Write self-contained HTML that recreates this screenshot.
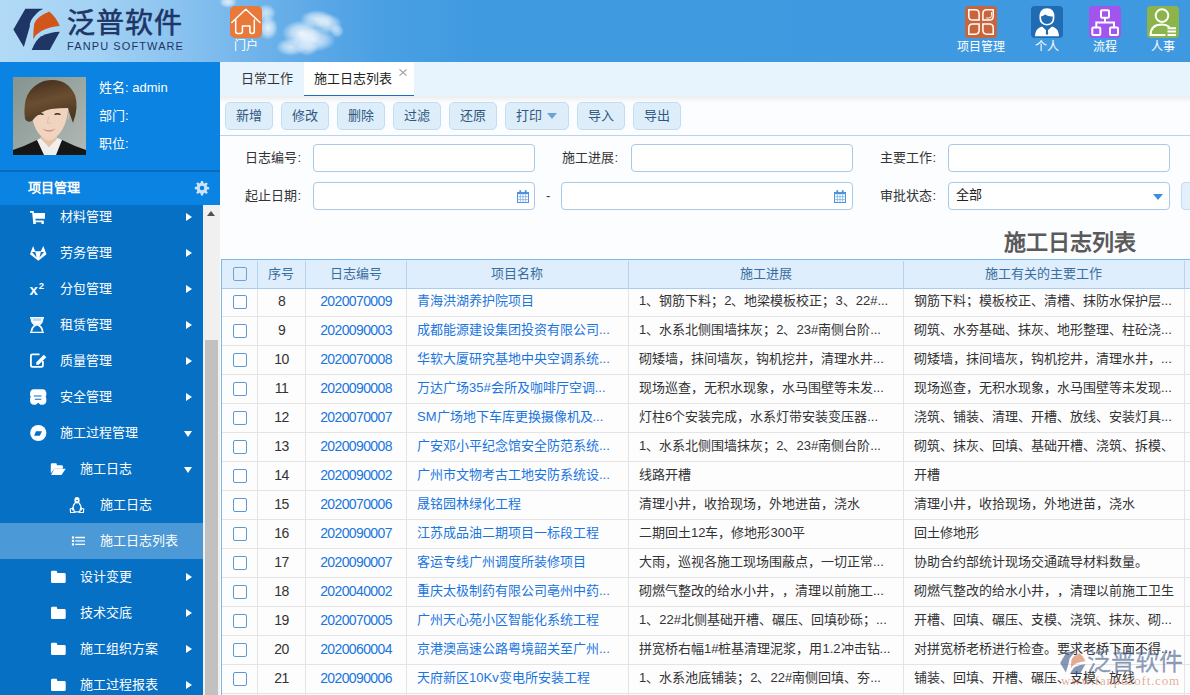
<!DOCTYPE html><html lang="zh-CN"><head><meta charset="utf-8"><style>
*{margin:0;padding:0;box-sizing:border-box}
html,body{width:1190px;height:695px;overflow:hidden;background:#fff;font-family:"Liberation Sans",sans-serif;font-size:13px;color:#333;text-spacing-trim:space-all}
div,span{position:absolute}
svg{position:absolute;overflow:visible}
.t{white-space:nowrap;line-height:1}
#hdr{left:0;top:0;width:1190px;height:62px;background:linear-gradient(90deg,#b2daf6 0%,#a3d2f4 8%,#86c0ef 16%,#6db2ea 22%,#58a6e6 27.7%,#4aa0e3 32%,#409ae0 40%,#3f99e0 100%);overflow:hidden}
.cloud{border-radius:50%;background:radial-gradient(closest-side,rgba(255,255,255,.95),rgba(255,255,255,.6) 55%,rgba(255,255,255,0))}
.hi{width:32px;height:32px;border-radius:5px}
.hl{color:#fff;font-size:12px;text-align:center;width:80px}
.mi{color:#fff;font-size:13px}
.arr{width:0;height:0;border-top:4.25px solid transparent;border-bottom:4.25px solid transparent;border-left:6px solid #fff}
.arrd{width:0;height:0;border-left:4.6px solid transparent;border-right:4.6px solid transparent;border-top:6px solid #fff}
.btn{top:102px;height:28px;background:#deedfa;border:1px solid #c4dcf1;border-radius:5px;color:#2d5780;font-size:13px;text-align:center;line-height:25px}
.lbl{font-size:13px;color:#333;text-align:right;width:80px}
.inp{height:28px;border:1px solid #a9c9e6;border-radius:4px;background:#fff}
.c{color:#333}
.lk{color:#1a75dd}
.cb{width:14px;height:14px;border:1px solid #5a9ad6;border-radius:2px;background:#fff}
</style></head><body>
<div id="hdr">
<div class="cloud" style="left:219px;top:-4px;width:18px;height:12px;opacity:0.8"></div>
<div class="cloud" style="left:256px;top:4px;width:20px;height:18px;opacity:0.7"></div>
<div class="cloud" style="left:258px;top:16px;width:20px;height:24px;opacity:0.85"></div>
<div class="cloud" style="left:300px;top:10px;width:34px;height:18px;opacity:0.8"></div>
<div class="cloud" style="left:314px;top:14px;width:28px;height:20px;opacity:0.75"></div>
<div class="cloud" style="left:282px;top:20px;width:40px;height:26px;opacity:0.9"></div>
<div class="cloud" style="left:292px;top:28px;width:44px;height:24px;opacity:0.8"></div>
<div class="cloud" style="left:276px;top:38px;width:30px;height:18px;opacity:0.75"></div>
<div class="cloud" style="left:296px;top:40px;width:22px;height:16px;opacity:0.6"></div>
<div class="cloud" style="left:330px;top:24px;width:14px;height:14px;opacity:0.6"></div>
<svg style="left:13px;top:8px" width="48" height="43" viewBox="0 0 48 43">
<path d="M12.35 0.64 H30.3 Q23 4 18 12.5 Q16.5 16 16.8 18.5 L10.85 39 L0.37 21.45 Z" fill="#1e3566"/>
<path d="M20.2 31.2 Q20.5 20 21.3 15.5 Q23 9 36.3 3.5 Q43 9 46.8 18.1 Q37 18.5 28.4 23 Q23 26 20.2 31.2 Z" fill="#d2551c"/>
<path d="M18.7 42 H36.7 L46.8 23.7 Q37.4 23.9 28.4 28.2 Q23 31 18.7 42 Z" fill="#1e3566"/>
</svg>
<div class="t" style="left:67px;top:10px;font-size:28px;color:#1e3566;letter-spacing:1px;font-weight:500;-webkit-text-stroke:0.6px #1e3566">泛普软件</div>
<div class="t" style="left:67px;top:41px;font-size:11px;color:#1e3566;letter-spacing:1.1px">FANPU SOFTWARE</div>
<svg style="left:230px;top:6px" width="32" height="32" viewBox="0 0 32 32">
<rect width="32" height="32" rx="5" fill="#e8793a"/>
<path d="M1.8 16.5 L15.8 3.2 L30 16.5 M5.7 14 V25.5 Q5.7 27.4 7.6 27.4 H10.5 Q12.4 27.4 12.4 25.5 V20 H19.9 V25.5 Q19.9 27.4 21.8 27.4 H22.4 Q24.3 27.4 24.3 25.5 V14" fill="none" stroke="#fff" stroke-width="1.5" stroke-linejoin="round" stroke-linecap="round"/>
</svg>
<div class="t hl" style="left:206px;top:40px;font-size:12px">门户</div>
<svg style="left:965px;top:6px" width="32" height="32" viewBox="0 0 32 32">
<rect width="32" height="32" rx="4" fill="#c9653a"/>
<g fill="none" stroke="#fff" stroke-width="1.5">
<path d="M3.8 3.8 H10.2 Q14.1 3.8 14.1 7.7 V14.1 H7.7 Q3.8 14.1 3.8 10.2 Z"/>
<path d="M28.2 3.8 H21.8 Q17.9 3.8 17.9 7.7 V14.1 H24.3 Q28.2 14.1 28.2 10.2 Z"/>
<path d="M3.8 28.2 H10.2 Q14.1 28.2 14.1 24.3 V17.9 H7.7 Q3.8 17.9 3.8 21.8 Z"/>
<path d="M28.2 28.2 H21.8 Q17.9 28.2 17.9 24.3 V17.9 H24.3 Q28.2 17.9 28.2 21.8 Z"/>
<path d="M26.5 6 V9.5 Q26.5 12 24 12 H21" stroke-width=".9"/>
</g>
</svg>
<div class="t hl" style="left:941px;top:41px">项目管理</div>
<svg style="left:1031px;top:6px" width="32" height="32" viewBox="0 0 32 32">
<rect width="32" height="32" rx="4" fill="#1f6cb2"/>
<path d="M8.4 12 Q8 2.2 16 2.2 Q24 2.2 23.4 12 Q23.4 19 16 19.5 Q8.4 19 8.4 12 Z" fill="#fff"/>
<path d="M10 10.5 Q12.5 10 14 8.5 Q18 11 21.8 10.5 Q22 17.8 16 18 Q10 17.8 10 10.5 Z" fill="#1f6cb2"/>
<path d="M4 30.2 Q4.5 22 11 20.5 L16 25 L21 20.5 Q27.5 22 28 30.2 Z" fill="#fff"/>
<path d="M15.2 22.5 H16.8 L17.2 28 L16 29 L14.8 28 Z" fill="#1f6cb2"/>
</svg>
<div class="t hl" style="left:1007px;top:41px">个人</div>
<svg style="left:1089px;top:6px" width="32" height="32" viewBox="0 0 32 32">
<rect width="32" height="32" rx="4" fill="#a154ee"/>
<g fill="none" stroke="#fff" stroke-width="2">
<rect x="12" y="4.3" width="8" height="7.4" rx="1"/>
<rect x="3.3" y="21.5" width="8" height="7.4" rx="1"/>
<rect x="21" y="21.5" width="8" height="7.4" rx="1"/>
<path d="M16 11.7 V16.5 M7.3 21.5 V16.5 H25 V21.5"/>
</g>
</svg>
<div class="t hl" style="left:1065px;top:41px">流程</div>
<svg style="left:1147px;top:6px" width="32" height="32" viewBox="0 0 32 32">
<rect width="32" height="32" rx="4" fill="#8bb44a"/>
<circle cx="15" cy="9.6" r="6.3" fill="none" stroke="#fff" stroke-width="2"/>
<path d="M3.6 29 Q3.6 18.5 15 18.5 Q19.5 18.5 22.5 21" fill="none" stroke="#fff" stroke-width="2"/>
<path d="M2.6 29 H18.5" stroke="#fff" stroke-width="2"/>
<path d="M20.5 22.2 H29 M20.5 25.6 H29 M20.5 29 H29" stroke="#fff" stroke-width="2"/>
</svg>
<div class="t hl" style="left:1123px;top:41px">人事</div>
</div>
<div style="left:0;top:62px;width:220px;height:633px;background:#0670c5"></div>
<div style="left:0;top:62px;width:220px;height:109px;background:#0b83e2"></div>
<div style="left:0;top:170px;width:220px;height:2px;background:#0a6bbd"></div>
<div style="left:0;top:172px;width:220px;height:33px;background:#0b83e2"></div>
<svg style="left:13px;top:77px" width="73" height="78" viewBox="0 0 73 78">
<defs><linearGradient id="pbg" x1="0" y1="0" x2="1" y2="1"><stop offset="0" stop-color="#84948e"/><stop offset="1" stop-color="#b2b9b6"/></linearGradient>
<linearGradient id="hair" x1="0" y1="0" x2=".3" y2="1"><stop offset="0" stop-color="#3d2b1a"/><stop offset=".55" stop-color="#6b4e31"/><stop offset="1" stop-color="#4d3822"/></linearGradient></defs>
<rect width="73" height="78" fill="url(#pbg)"/>
<path d="M0 78 V73 Q12 69 24 63 L36 74 L49 63 Q61 69 73 73 V78 Z" fill="#161616"/>
<path d="M24 63 L31 78 H43 L49 63 L42 60 L36 70 L30 60 Z" fill="#f1efed"/>
<path d="M28 52 V62 L36 70 L44 62 V52 Z" fill="#e8c2a6"/>
<path d="M18.5 28 Q18 57 36 64 Q54 57 55.5 28 Z" fill="#f0d4bf"/>
<path d="M17.5 36 Q15.5 38 18.5 44 Z M55.5 36 Q57.5 38 54.5 44 Z" fill="#e6c0a5"/>
<path d="M29 51.5 Q36 55 43 51.5 Q36 58 29 51.5 Z" fill="#d48a8a"/>
<path d="M24.5 37.5 Q27.5 36 30.5 37.5 M41.5 37.5 Q44.5 36 47.5 37.5" fill="none" stroke="#3a2a22" stroke-width="1.3"/>
<path d="M35.5 40 L34.5 46 H37.5" fill="none" stroke="#d9b49a" stroke-width=".8"/>
<path d="M12 42 Q8 12 31 4 Q53 -1 62 18 Q66 30 60 46 Q57 38 55 31 Q47 31 38 32 Q27 34 19 44 Q14 46 12 42 Z" fill="url(#hair)"/>
</svg>
<div class="t" style="left:99px;top:81px;color:#fff;font-size:13px">姓名: admin</div>
<div class="t" style="left:99px;top:109px;color:#fff;font-size:13px">部门:</div>
<div class="t" style="left:99px;top:137px;color:#fff;font-size:13px">职位:</div>
<div class="t" style="left:28px;top:181px;color:#fff;font-size:13px;font-weight:bold">项目管理</div>
<svg style="left:195px;top:181px" width="14" height="14" viewBox="0 0 14 14">
<path fill="#cfe3f7" d="M6 0h2l.4 2 1.3.6 1.7-1.2 1.4 1.4-1.2 1.7.6 1.3 2 .4v2l-2 .4-.6 1.3 1.2 1.7-1.4 1.4-1.7-1.2-1.3.6-.4 2H6l-.4-2-1.3-.6-1.7 1.2-1.4-1.4 1.2-1.7-.6-1.3-2-.4V6l2-.4.6-1.3-1.2-1.7 1.4-1.4 1.7 1.2 1.3-.6z"/>
<circle cx="7" cy="7" r="2.3" fill="#0b83e2"/>
</svg>
<div style="left:0;top:523px;width:203px;height:36px;background:#4b99d6"></div>
<svg style="left:30px;top:210px" width="16" height="16" viewBox="0 0 16 16"><path d="M0 1 H3.6 L4 3 H15 V8.8 H5.4 L5.6 10.5 H13.8 V14 H11.5 V12.2 H5.8 V14 H3.3 L2.2 2.8 H0 Z" fill="#fff"/></svg>
<div class="t mi" style="left:60px;top:210px">材料管理</div>
<div class="arr" style="left:186px;top:212.5px"></div>
<svg style="left:30px;top:246px" width="16" height="16" viewBox="0 0 16 16"><path d="M0 8.3 L3.1 0.1 L5.15 5.15 H10.85 L13.3 0.1 L16.5 8.3 L8.3 14.8 Z" fill="#fff"/><path d="M2.04 6 H5.3 L6.7 11.4 Z M10.85 6 H14 L9.5 11.4 Z" fill="#0670c5"/></svg>
<div class="t mi" style="left:60px;top:246px">劳务管理</div>
<div class="arr" style="left:186px;top:248.5px"></div>
<svg style="left:30px;top:280px" width="16" height="16" viewBox="0 0 16 16"><text x="-0.5" y="14.9" font-family="Liberation Sans" font-weight="bold" font-size="15" fill="#fff">x</text><text x="8.8" y="9.4" font-family="Liberation Sans" font-weight="bold" font-size="9.5" fill="#fff">2</text></svg>
<div class="t mi" style="left:60px;top:282px">分包管理</div>
<div class="arr" style="left:186px;top:284.5px"></div>
<svg style="left:30px;top:316px" width="16" height="16" viewBox="0 0 16 16"><path d="M0 1 H14 V2.8 H0 Z M0 15.8 H14 V17 H0 Z" fill="#fff"/><path d="M1.5 2.8 Q1.5 7 5.5 9.3 Q1.5 11.5 1.5 15.8 M12.5 2.8 Q12.5 7 8.5 9.3 Q12.5 11.5 12.5 15.8" fill="none" stroke="#fff" stroke-width="1.7"/><path d="M1.8 2.8 H12.2 Q12 7 7 9.4 Q2 7 1.8 2.8 Z" fill="#fff"/><rect x="3" y="3.2" width="8" height="1.5" fill="#a9cdee"/></svg>
<div class="t mi" style="left:60px;top:318px">租赁管理</div>
<div class="arr" style="left:186px;top:320.5px"></div>
<svg style="left:30px;top:352px" width="16" height="16" viewBox="0 0 16 16"><path d="M9.5 2.3 H2.5 Q0.9 2.3 0.9 3.9 V13.3 Q0.9 14.9 2.5 14.9 H11.3 Q12.9 14.9 12.9 13.3 V9" fill="none" stroke="#fff" stroke-width="1.8"/><path d="M6.2 12.8 L6.3 10.3 L13.8 2.8 L16.3 5.3 L8.7 12.8 Z" fill="#fff"/></svg>
<div class="t mi" style="left:60px;top:354px">质量管理</div>
<div class="arr" style="left:186px;top:356.5px"></div>
<svg style="left:30px;top:388px" width="16" height="16" viewBox="0 0 16 16"><path d="M4 1.3 H12.4 Q16.4 1.3 16.4 6 Q16.4 8 15.6 8.5 Q16.4 9.5 16.4 12 Q16.4 16.8 12.4 16.8 H10.5 L8.2 14.8 L5.9 16.8 H4 Q0 16.8 0 12 Q0 9.5 0.8 8.5 Q0 8 0 6 Q0 1.3 4 1.3 Z" fill="#fff"/><path d="M3.8 8 H11.5 M4.8 11.3 H11.3" stroke="#0670c5" stroke-width="1.1"/></svg>
<div class="t mi" style="left:60px;top:390px">安全管理</div>
<div class="arr" style="left:186px;top:392.5px"></div>
<svg style="left:30px;top:424px" width="16" height="16" viewBox="0 0 16 16"><circle cx="8.3" cy="9" r="8.1" fill="#fff"/><path d="M6 7.2 H12 L9.8 11.8 H4.1 Z" fill="#0670c5"/></svg>
<div class="t mi" style="left:60px;top:426px">施工过程管理</div>
<div class="arrd" style="left:183.5px;top:431px"></div>
<svg style="left:50px;top:460px" width="16" height="16" viewBox="0 0 16 16"><path d="M0.8 4.5 Q0.8 3.2 2 3.2 H6.4 L7 5.2 H11.8 Q12.9 5.2 12.9 6.3 V8.7 H4.3 L0.8 13.5 Z" fill="#fff"/><path d="M4.3 8.7 H15.7 L11.5 14.9 H1.2 Z" fill="#fff"/></svg>
<div class="t mi" style="left:80px;top:462px">施工日志</div>
<div class="arrd" style="left:183.5px;top:467px"></div>
<svg style="left:70px;top:496px" width="16" height="16" viewBox="0 0 16 16"><ellipse cx="7" cy="4.3" rx="2.6" ry="3.2" fill="#fff"/><path d="M5.2 6.8 Q2 10.5 3 14.5 M8.8 6.8 Q12 10.5 11 14.5" fill="none" stroke="#fff" stroke-width="1.3"/><path d="M0.3 13 L3.3 12 L4.5 16.5 H0.6 Z M13.7 13 L10.7 12 L9.5 16.5 H13.4 Z M4.5 15.8 H9.5" fill="none" stroke="#fff" stroke-width="1.2"/><ellipse cx="7" cy="4.6" rx="1" ry=".7" fill="#0670c5"/></svg>
<div class="t mi" style="left:100px;top:498px">施工日志</div>
<svg style="left:70px;top:532px" width="16" height="16" viewBox="0 0 16 16"><rect x="1.9" y="4.4" width="2.2" height="2.2" fill="#fff"/><rect x="1.9" y="7.8" width="2.2" height="2.2" fill="#fff"/><rect x="1.9" y="11.3" width="2.2" height="2.2" fill="#fff"/><path d="M5.3 5.5 H15 M5.3 12.4 H15" stroke="#fff" stroke-width="1.4"/><path d="M5.3 8.9 H15" stroke="#d4e5f5" stroke-width="1.6"/></svg>
<div class="t mi" style="left:100px;top:534px">施工日志列表</div>
<svg style="left:50px;top:568px" width="16" height="16" viewBox="0 0 16 16"><path d="M1 4 Q1 2.7 2.3 2.7 H6.6 L7.4 4.9 H14.4 Q15.7 4.9 15.7 6.2 V13.7 Q15.7 15 14.4 15 H2.3 Q1 15 1 13.7 Z" fill="#fff"/></svg>
<div class="t mi" style="left:80px;top:570px">设计变更</div>
<div class="arr" style="left:186px;top:572.5px"></div>
<svg style="left:50px;top:604px" width="16" height="16" viewBox="0 0 16 16"><path d="M1 4 Q1 2.7 2.3 2.7 H6.6 L7.4 4.9 H14.4 Q15.7 4.9 15.7 6.2 V13.7 Q15.7 15 14.4 15 H2.3 Q1 15 1 13.7 Z" fill="#fff"/></svg>
<div class="t mi" style="left:80px;top:606px">技术交底</div>
<div class="arr" style="left:186px;top:608.5px"></div>
<svg style="left:50px;top:640px" width="16" height="16" viewBox="0 0 16 16"><path d="M1 4 Q1 2.7 2.3 2.7 H6.6 L7.4 4.9 H14.4 Q15.7 4.9 15.7 6.2 V13.7 Q15.7 15 14.4 15 H2.3 Q1 15 1 13.7 Z" fill="#fff"/></svg>
<div class="t mi" style="left:80px;top:642px">施工组织方案</div>
<div class="arr" style="left:186px;top:644.5px"></div>
<svg style="left:50px;top:676px" width="16" height="16" viewBox="0 0 16 16"><path d="M1 4 Q1 2.7 2.3 2.7 H6.6 L7.4 4.9 H14.4 Q15.7 4.9 15.7 6.2 V13.7 Q15.7 15 14.4 15 H2.3 Q1 15 1 13.7 Z" fill="#fff"/></svg>
<div class="t mi" style="left:80px;top:678px">施工过程报表</div>
<div class="arr" style="left:186px;top:680.5px"></div>
<div style="left:0;top:172px;width:220px;height:33px;background:#0b83e2"></div>
<div class="t" style="left:28px;top:181px;color:#fff;font-size:13px;font-weight:bold">项目管理</div>
<svg style="left:195px;top:181px" width="14" height="14" viewBox="0 0 14 14">
<path fill="#cfe3f7" d="M6 0h2l.4 2 1.3.6 1.7-1.2 1.4 1.4-1.2 1.7.6 1.3 2 .4v2l-2 .4-.6 1.3 1.2 1.7-1.4 1.4-1.7-1.2-1.3.6-.4 2H6l-.4-2-1.3-.6-1.7 1.2-1.4-1.4 1.2-1.7-.6-1.3-2-.4V6l2-.4.6-1.3-1.2-1.7 1.4-1.4 1.7 1.2 1.3-.6z"/>
<circle cx="7" cy="7" r="2.3" fill="#0b83e2"/>
</svg>
<div style="left:203px;top:205px;width:17px;height:490px;background:#f0f0f0"></div>
<div style="left:207px;top:211px;width:0;height:0;border-left:4.5px solid transparent;border-right:4.5px solid transparent;border-bottom:5px solid #505050"></div>
<div style="left:205px;top:340px;width:13px;height:355px;background:#c1c1c1"></div>
<div style="left:220px;top:62px;width:970px;height:633px;background:#fbfdff"></div>
<div style="left:220px;top:62px;width:970px;height:34px;background:#e8f4fd"></div>
<div style="left:220px;top:96px;width:970px;height:7px;background:linear-gradient(#ebedef,#fbfdff)"></div>
<div class="t" style="left:241px;top:72px;font-size:13px;color:#333">日常工作</div>
<div style="left:304px;top:62px;width:110px;height:34px;background:#fff;border-bottom:1.5px solid #1b6fc2"></div>
<div class="t" style="left:314px;top:72px;font-size:13px;color:#222">施工日志列表</div>
<svg style="left:399px;top:69px" width="8" height="7" viewBox="0 0 8 7"><path d="M0.5 0.3 L7.5 6.7 M7.5 0.3 L0.5 6.7" stroke="#9a9a9a" stroke-width="1.1"/></svg>
<div class="btn" style="left:225px;width:48px">新增</div>
<div class="btn" style="left:281px;width:48px">修改</div>
<div class="btn" style="left:337px;width:48px">删除</div>
<div class="btn" style="left:393px;width:48px">过滤</div>
<div class="btn" style="left:449px;width:48px">还原</div>
<div class="btn" style="left:577px;width:48px">导入</div>
<div class="btn" style="left:633px;width:48px">导出</div>
<div class="btn" style="left:505px;width:64px;text-align:left;padding-left:10px">打印</div>
<div style="left:547px;top:113px;width:0;height:0;border-left:5px solid transparent;border-right:5px solid transparent;border-top:6px solid #6ea2d6"></div>
<div style="left:220px;top:135px;width:970px;height:1px;background:#b9d4ee"></div>
<div class="t lbl" style="left:221px;top:151px">日志编号:</div>
<div class="inp" style="left:313px;top:144px;width:222px"></div>
<div class="t lbl" style="left:538px;top:151px">施工进展:</div>
<div class="inp" style="left:631px;top:144px;width:222px"></div>
<div class="t lbl" style="left:856px;top:151px">主要工作:</div>
<div class="inp" style="left:948px;top:144px;width:222px"></div>
<div class="t lbl" style="left:221px;top:189px">起止日期:</div>
<div class="inp" style="left:313px;top:182px;width:222px"></div>
<div class="t" style="left:546px;top:189px;color:#333">-</div>
<div class="inp" style="left:561px;top:182px;width:292px"></div>
<svg style="left:517px;top:190px" width="12" height="13" viewBox="0 0 12 13"><rect x="0.5" y="2.5" width="11" height="10" fill="#fff" stroke="#4d92dc" stroke-width="1"/><rect x="0.5" y="2.5" width="11" height="1.6" fill="#4d92dc"/><rect x="2.4" y="0.2" width="1.8" height="3" fill="#4d92dc"/><rect x="7.8" y="0.2" width="1.8" height="3" fill="#4d92dc"/><path d="M3.3 4 V12.5 M6 4 V12.5 M8.7 4 V12.5 M0.5 6.7 H11.5 M0.5 9.6 H11.5" stroke="#7fb0e6" stroke-width=".8"/></svg>
<svg style="left:834px;top:190px" width="12" height="13" viewBox="0 0 12 13"><rect x="0.5" y="2.5" width="11" height="10" fill="#fff" stroke="#4d92dc" stroke-width="1"/><rect x="0.5" y="2.5" width="11" height="1.6" fill="#4d92dc"/><rect x="2.4" y="0.2" width="1.8" height="3" fill="#4d92dc"/><rect x="7.8" y="0.2" width="1.8" height="3" fill="#4d92dc"/><path d="M3.3 4 V12.5 M6 4 V12.5 M8.7 4 V12.5 M0.5 6.7 H11.5 M0.5 9.6 H11.5" stroke="#7fb0e6" stroke-width=".8"/></svg>
<div class="t lbl" style="left:856px;top:189px">审批状态:</div>
<div class="inp" style="left:948px;top:182px;width:222px"></div>
<div class="t" style="left:956px;top:188px;color:#222">全部</div>
<div style="left:1153px;top:194px;width:0;height:0;border-left:5px solid transparent;border-right:5px solid transparent;border-top:6px solid #3d8fd8"></div>
<div style="left:1181px;top:182px;width:20px;height:28px;background:#e4f0fb;border:1px solid #c4dcf1;border-radius:4px"></div>
<div class="t" style="left:1004px;top:232px;font-size:22px;font-weight:bold;color:#5a5a5a">施工日志列表</div>
<div style="left:222px;top:288px;width:968px;height:29px;background:#fdfdfe;border-bottom:1px solid #e4e4e4"></div>
<div class="cb" style="left:233px;top:295px"></div>
<div class="t c" style="left:257px;top:293.5px;width:48px;text-align:center;font-size:14px;letter-spacing:-0.6px;text-indent:1px">8</div>
<div class="t lk" style="left:305px;top:293.5px;width:101px;text-align:center;font-size:14px;letter-spacing:-0.62px;text-indent:1px">2020070009</div>
<div class="t lk" style="left:417px;top:294px">青海洪湖养护院项目</div>
<div class="t c" style="left:639px;top:294px">1、钢筋下料；2、地梁模板校正；3、22#...</div>
<div class="t c" style="left:914px;top:294px;width:265px;overflow:hidden">钢筋下料；模板校正、清槽、抹防水保护层...</div>
<div style="left:222px;top:317px;width:968px;height:29px;background:#fdfdfe;border-bottom:1px solid #e4e4e4"></div>
<div class="cb" style="left:233px;top:324px"></div>
<div class="t c" style="left:257px;top:322.5px;width:48px;text-align:center;font-size:14px;letter-spacing:-0.6px;text-indent:1px">9</div>
<div class="t lk" style="left:305px;top:322.5px;width:101px;text-align:center;font-size:14px;letter-spacing:-0.62px;text-indent:1px">2020090003</div>
<div class="t lk" style="left:417px;top:323px">成都能源建设集团投资有限公司...</div>
<div class="t c" style="left:639px;top:323px">1、水系北侧围墙抹灰；2、23#南侧台阶...</div>
<div class="t c" style="left:914px;top:323px;width:265px;overflow:hidden">砌筑、水夯基础、抹灰、地形整理、柱砼浇...</div>
<div style="left:222px;top:346px;width:968px;height:29px;background:#fdfdfe;border-bottom:1px solid #e4e4e4"></div>
<div class="cb" style="left:233px;top:353px"></div>
<div class="t c" style="left:257px;top:351.5px;width:48px;text-align:center;font-size:14px;letter-spacing:-0.6px;text-indent:1px">10</div>
<div class="t lk" style="left:305px;top:351.5px;width:101px;text-align:center;font-size:14px;letter-spacing:-0.62px;text-indent:1px">2020070008</div>
<div class="t lk" style="left:417px;top:352px">华软大厦研究基地中央空调系统...</div>
<div class="t c" style="left:639px;top:352px">砌矮墙，抹间墙灰，钩机挖井，清理水井...</div>
<div class="t c" style="left:914px;top:352px;width:265px;overflow:hidden">砌矮墙，抹间墙灰，钩机挖井，清理水井，...</div>
<div style="left:222px;top:375px;width:968px;height:29px;background:#fdfdfe;border-bottom:1px solid #e4e4e4"></div>
<div class="cb" style="left:233px;top:382px"></div>
<div class="t c" style="left:257px;top:380.5px;width:48px;text-align:center;font-size:14px;letter-spacing:-0.6px;text-indent:1px">11</div>
<div class="t lk" style="left:305px;top:380.5px;width:101px;text-align:center;font-size:14px;letter-spacing:-0.62px;text-indent:1px">2020090008</div>
<div class="t lk" style="left:417px;top:381px">万达广场35#会所及咖啡厅空调...</div>
<div class="t c" style="left:639px;top:381px">现场巡查，无积水现象，水马围壁等未发...</div>
<div class="t c" style="left:914px;top:381px;width:265px;overflow:hidden">现场巡查，无积水现象，水马围壁等未发现...</div>
<div style="left:222px;top:404px;width:968px;height:29px;background:#fdfdfe;border-bottom:1px solid #e4e4e4"></div>
<div class="cb" style="left:233px;top:411px"></div>
<div class="t c" style="left:257px;top:409.5px;width:48px;text-align:center;font-size:14px;letter-spacing:-0.6px;text-indent:1px">12</div>
<div class="t lk" style="left:305px;top:409.5px;width:101px;text-align:center;font-size:14px;letter-spacing:-0.62px;text-indent:1px">2020070007</div>
<div class="t lk" style="left:417px;top:410px">SM广场地下车库更换摄像机及...</div>
<div class="t c" style="left:639px;top:410px">灯柱6个安装完成，水系灯带安装变压器...</div>
<div class="t c" style="left:914px;top:410px;width:265px;overflow:hidden">浇筑、铺装、清理、开槽、放线、安装灯具...</div>
<div style="left:222px;top:433px;width:968px;height:29px;background:#fdfdfe;border-bottom:1px solid #e4e4e4"></div>
<div class="cb" style="left:233px;top:440px"></div>
<div class="t c" style="left:257px;top:438.5px;width:48px;text-align:center;font-size:14px;letter-spacing:-0.6px;text-indent:1px">13</div>
<div class="t lk" style="left:305px;top:438.5px;width:101px;text-align:center;font-size:14px;letter-spacing:-0.62px;text-indent:1px">2020090008</div>
<div class="t lk" style="left:417px;top:439px">广安邓小平纪念馆安全防范系统...</div>
<div class="t c" style="left:639px;top:439px">1、水系北侧围墙抹灰；2、23#南侧台阶...</div>
<div class="t c" style="left:914px;top:439px;width:265px;overflow:hidden">砌筑、抹灰、回填、基础开槽、浇筑、拆模、</div>
<div style="left:222px;top:462px;width:968px;height:29px;background:#fdfdfe;border-bottom:1px solid #e4e4e4"></div>
<div class="cb" style="left:233px;top:469px"></div>
<div class="t c" style="left:257px;top:467.5px;width:48px;text-align:center;font-size:14px;letter-spacing:-0.6px;text-indent:1px">14</div>
<div class="t lk" style="left:305px;top:467.5px;width:101px;text-align:center;font-size:14px;letter-spacing:-0.62px;text-indent:1px">2020090002</div>
<div class="t lk" style="left:417px;top:468px">广州市文物考古工地安防系统设...</div>
<div class="t c" style="left:639px;top:468px">线路开槽</div>
<div class="t c" style="left:914px;top:468px;width:265px;overflow:hidden">开槽</div>
<div style="left:222px;top:491px;width:968px;height:29px;background:#fdfdfe;border-bottom:1px solid #e4e4e4"></div>
<div class="cb" style="left:233px;top:498px"></div>
<div class="t c" style="left:257px;top:496.5px;width:48px;text-align:center;font-size:14px;letter-spacing:-0.6px;text-indent:1px">15</div>
<div class="t lk" style="left:305px;top:496.5px;width:101px;text-align:center;font-size:14px;letter-spacing:-0.62px;text-indent:1px">2020070006</div>
<div class="t lk" style="left:417px;top:497px">晟铭园林绿化工程</div>
<div class="t c" style="left:639px;top:497px">清理小井，收拾现场，外地进苗，浇水</div>
<div class="t c" style="left:914px;top:497px;width:265px;overflow:hidden">清理小井，收拾现场，外地进苗，浇水</div>
<div style="left:222px;top:520px;width:968px;height:29px;background:#fdfdfe;border-bottom:1px solid #e4e4e4"></div>
<div class="cb" style="left:233px;top:527px"></div>
<div class="t c" style="left:257px;top:525.5px;width:48px;text-align:center;font-size:14px;letter-spacing:-0.6px;text-indent:1px">16</div>
<div class="t lk" style="left:305px;top:525.5px;width:101px;text-align:center;font-size:14px;letter-spacing:-0.62px;text-indent:1px">2020090007</div>
<div class="t lk" style="left:417px;top:526px">江苏成品油二期项目一标段工程</div>
<div class="t c" style="left:639px;top:526px">二期回土12车，修地形300平</div>
<div class="t c" style="left:914px;top:526px;width:265px;overflow:hidden">回土修地形</div>
<div style="left:222px;top:549px;width:968px;height:29px;background:#fdfdfe;border-bottom:1px solid #e4e4e4"></div>
<div class="cb" style="left:233px;top:556px"></div>
<div class="t c" style="left:257px;top:554.5px;width:48px;text-align:center;font-size:14px;letter-spacing:-0.6px;text-indent:1px">17</div>
<div class="t lk" style="left:305px;top:554.5px;width:101px;text-align:center;font-size:14px;letter-spacing:-0.62px;text-indent:1px">2020090007</div>
<div class="t lk" style="left:417px;top:555px">客运专线广州调度所装修项目</div>
<div class="t c" style="left:639px;top:555px">大雨，巡视各施工现场围蔽点，一切正常...</div>
<div class="t c" style="left:914px;top:555px;width:265px;overflow:hidden">协助合约部统计现场交通疏导材料数量。</div>
<div style="left:222px;top:578px;width:968px;height:29px;background:#fdfdfe;border-bottom:1px solid #e4e4e4"></div>
<div class="cb" style="left:233px;top:585px"></div>
<div class="t c" style="left:257px;top:583.5px;width:48px;text-align:center;font-size:14px;letter-spacing:-0.6px;text-indent:1px">18</div>
<div class="t lk" style="left:305px;top:583.5px;width:101px;text-align:center;font-size:14px;letter-spacing:-0.62px;text-indent:1px">2020040002</div>
<div class="t lk" style="left:417px;top:584px">重庆太极制药有限公司亳州中药...</div>
<div class="t c" style="left:639px;top:584px">砌燃气整改的给水小井，，清理以前施工...</div>
<div class="t c" style="left:914px;top:584px;width:265px;overflow:hidden">砌燃气整改的给水小井，，清理以前施工卫生</div>
<div style="left:222px;top:607px;width:968px;height:29px;background:#fdfdfe;border-bottom:1px solid #e4e4e4"></div>
<div class="cb" style="left:233px;top:614px"></div>
<div class="t c" style="left:257px;top:612.5px;width:48px;text-align:center;font-size:14px;letter-spacing:-0.6px;text-indent:1px">19</div>
<div class="t lk" style="left:305px;top:612.5px;width:101px;text-align:center;font-size:14px;letter-spacing:-0.62px;text-indent:1px">2020070005</div>
<div class="t lk" style="left:417px;top:613px">广州天心苑小区智能化系统工程</div>
<div class="t c" style="left:639px;top:613px">1、22#北侧基础开槽、碾压、回填砂砾；...</div>
<div class="t c" style="left:914px;top:613px;width:265px;overflow:hidden">开槽、回填、碾压、支模、浇筑、抹灰、砌...</div>
<div style="left:222px;top:636px;width:968px;height:29px;background:#fdfdfe;border-bottom:1px solid #e4e4e4"></div>
<div class="cb" style="left:233px;top:643px"></div>
<div class="t c" style="left:257px;top:641.5px;width:48px;text-align:center;font-size:14px;letter-spacing:-0.6px;text-indent:1px">20</div>
<div class="t lk" style="left:305px;top:641.5px;width:101px;text-align:center;font-size:14px;letter-spacing:-0.62px;text-indent:1px">2020060004</div>
<div class="t lk" style="left:417px;top:642px">京港澳高速公路粤境韶关至广州...</div>
<div class="t c" style="left:639px;top:642px">拼宽桥右幅1#桩基清理泥浆，用1.2冲击钻...</div>
<div class="t c" style="left:914px;top:642px;width:265px;overflow:hidden">对拼宽桥老桥进行检查。要求老桥下面不得...</div>
<div style="left:222px;top:665px;width:968px;height:29px;background:#fdfdfe;border-bottom:1px solid #e4e4e4"></div>
<div class="cb" style="left:233px;top:672px"></div>
<div class="t c" style="left:257px;top:670.5px;width:48px;text-align:center;font-size:14px;letter-spacing:-0.6px;text-indent:1px">21</div>
<div class="t lk" style="left:305px;top:670.5px;width:101px;text-align:center;font-size:14px;letter-spacing:-0.62px;text-indent:1px">2020090006</div>
<div class="t lk" style="left:417px;top:671px">天府新区10Kv变电所安装工程</div>
<div class="t c" style="left:639px;top:671px">1、水系池底铺装；2、22#南侧回填、夯...</div>
<div class="t c" style="left:914px;top:671px;width:265px;overflow:hidden">铺装、回填、开槽、碾压、支模、放线</div>
<div style="left:257px;top:288px;width:1px;height:407px;background:#e4e4e4"></div>
<div style="left:305px;top:288px;width:1px;height:407px;background:#e4e4e4"></div>
<div style="left:406px;top:288px;width:1px;height:407px;background:#e4e4e4"></div>
<div style="left:628px;top:288px;width:1px;height:407px;background:#e4e4e4"></div>
<div style="left:903px;top:288px;width:1px;height:407px;background:#e4e4e4"></div>
<div style="left:1184px;top:288px;width:1px;height:407px;background:#e4e4e4"></div>
<div style="left:221px;top:259px;width:969px;height:30px;background:#deeefc;border-top:1.5px solid #7db7e8;border-bottom:1px solid #a9cdee"></div>
<div style="left:221px;top:259px;width:1px;height:436px;background:#7db7e8"></div>
<div class="t" style="left:257px;top:267px;width:48px;text-align:center;color:#3a6d9e;font-size:13px">序号</div>
<div class="t" style="left:305px;top:267px;width:101px;text-align:center;color:#3a6d9e;font-size:13px">日志编号</div>
<div class="t" style="left:406px;top:267px;width:222px;text-align:center;color:#3a6d9e;font-size:13px">项目名称</div>
<div class="t" style="left:628px;top:267px;width:275px;text-align:center;color:#3a6d9e;font-size:13px">施工进展</div>
<div class="t" style="left:903px;top:267px;width:281px;text-align:center;color:#3a6d9e;font-size:13px">施工有关的主要工作</div>
<div style="left:257px;top:261px;width:1px;height:28px;background:#b7d4ee"></div>
<div style="left:305px;top:261px;width:1px;height:28px;background:#b7d4ee"></div>
<div style="left:406px;top:261px;width:1px;height:28px;background:#b7d4ee"></div>
<div style="left:628px;top:261px;width:1px;height:28px;background:#b7d4ee"></div>
<div style="left:903px;top:261px;width:1px;height:28px;background:#b7d4ee"></div>
<div style="left:1184px;top:261px;width:1px;height:28px;background:#b7d4ee"></div>
<div class="cb" style="left:233px;top:267px;border-color:#70a2d2;background:transparent"></div>
<svg style="left:1060px;top:651px;opacity:.6" width="26" height="24" viewBox="0 0 48 43">
<path d="M12.35 0.64 H30.3 Q23 4 18 12.5 Q16.5 16 16.8 18.5 L10.85 39 L0.37 21.45 Z" fill="#3a5285"/>
<path d="M20.2 31.2 Q20.5 20 21.3 15.5 Q23 9 36.3 3.5 Q43 9 46.8 18.1 Q37 18.5 28.4 23 Q23 26 20.2 31.2 Z" fill="#d2784c"/>
<path d="M18.7 42 H36.7 L46.8 23.7 Q37.4 23.9 28.4 28.2 Q23 31 18.7 42 Z" fill="#3a5285"/>
</svg>
<div class="t" style="left:1087px;top:650px;font-size:24px;font-weight:500;-webkit-text-stroke:.3px rgba(70,95,140,.5);color:rgba(70,95,140,.6)">泛普软件</div>
<div class="t" style="left:1061px;top:674px;font-family:'Liberation Serif',serif;font-size:13px;letter-spacing:.8px;color:rgba(210,120,80,.6)">www.fanpusoft.com</div>
</body></html>
